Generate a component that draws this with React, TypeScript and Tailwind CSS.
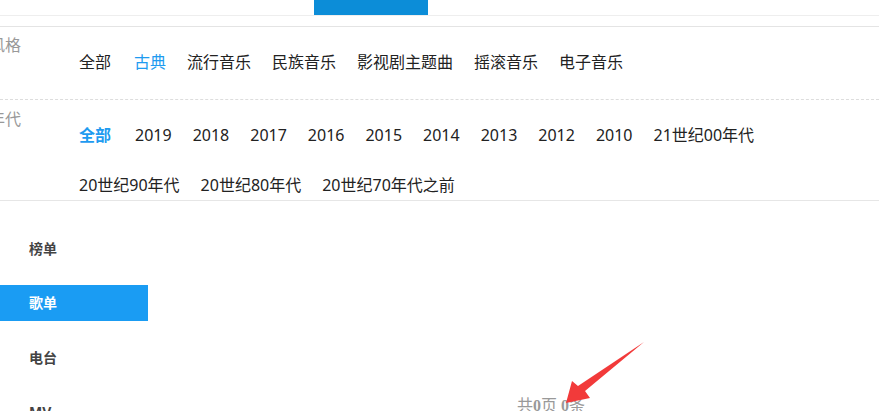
import React from 'react';

const styles = ['全部', '古典', '流行音乐', '民族音乐', '影视剧主题曲', '摇滚音乐', '电子音乐'];
const years = [
  '全部', '2019', '2018', '2017', '2016', '2015', '2014', '2013', '2012', '2010',
  '21世纪00年代', '20世纪90年代', '20世纪80年代', '20世纪70年代之前',
];
const menu = ['榜单', '歌单', '电台', 'MV'];

export default function App() {
  return (
    <div className="relative w-[879px] h-[411px] overflow-hidden bg-white font-['Noto_Sans','Noto_Sans_CJK_SC',sans-serif]">
      {/* 顶部导航 */}
      <div className="h-[16px] border-b border-[#eeeeee]">
        <div className="ml-[314px] w-[114px] h-[15px] bg-[#0c8dd8]" />
      </div>
      <div className="h-[11px] border-b border-[#e4e4e4]" />

      {/* 风格 */}
      <div className="flex border-b border-dashed border-[#dddddd] pb-[22px]">
        <div className="w-[90px] -ml-[11px] shrink-0 pt-[3px] text-[16px] leading-[30px] text-[#999999]">风格</div>
        <div className="flex flex-wrap gap-x-[21px] pt-[20px] text-[16px] leading-[30px] text-[#222222]">
          {styles.map((s, i) => (
            <span key={s} className={`${i === 0 ? 'mr-[2px]' : ''} ${s === '古典' ? 'text-[#1e9bf0]' : ''}`}>{s}</span>
          ))}
        </div>
      </div>

      {/* 年代 */}
      <div className="flex border-b border-[#e6e6e6]">
        <div className="w-[90px] -ml-[11px] shrink-0 pt-[4px] text-[16px] leading-[30px] text-[#999999]">年代</div>
        <div className="flex flex-wrap w-[760px] gap-x-[21px] gap-y-[20px] pt-[20px] text-[16px] leading-[30px] text-[#222222]">
          {years.map((y, i) => (
            <span key={y} className={i === 0 ? 'mr-[3px] text-[#1e9bf0] font-bold' : ''}>{y}</span>
          ))}
        </div>
      </div>

      {/* 主体 */}
      <div className="flex">
        <div className="w-[148px] shrink-0 pt-[29px] flex flex-col gap-[18.5px]">
          {menu.map((m) => (
            <div
              key={m}
              className={`h-[36px] pl-[29px] flex items-center text-[14px] font-bold ${
                m === '歌单' ? 'bg-[#1a9cf3] text-white' : 'text-[#444444]'
              }`}
            >
              {m}
            </div>
          ))}
        </div>
        <div className="flex-1 pt-[195px] pl-[369px]">
          <p className="text-[16px] leading-[20px] text-[#999999] font-['Liberation_Serif','Noto_Sans_CJK_SC',serif] whitespace-nowrap">
            共<b>0</b>页 <b>0</b>条
          </p>
        </div>
      </div>

      {/* 标注箭头 */}
      <svg className="absolute left-0 top-0 pointer-events-none" width="879" height="411" viewBox="0 0 879 411">
        <polygon
          points="644,342 585,391 590,398 566,403 572,381 578,386"
          fill="#f23a3a"
        />
      </svg>
    </div>
  );
}
